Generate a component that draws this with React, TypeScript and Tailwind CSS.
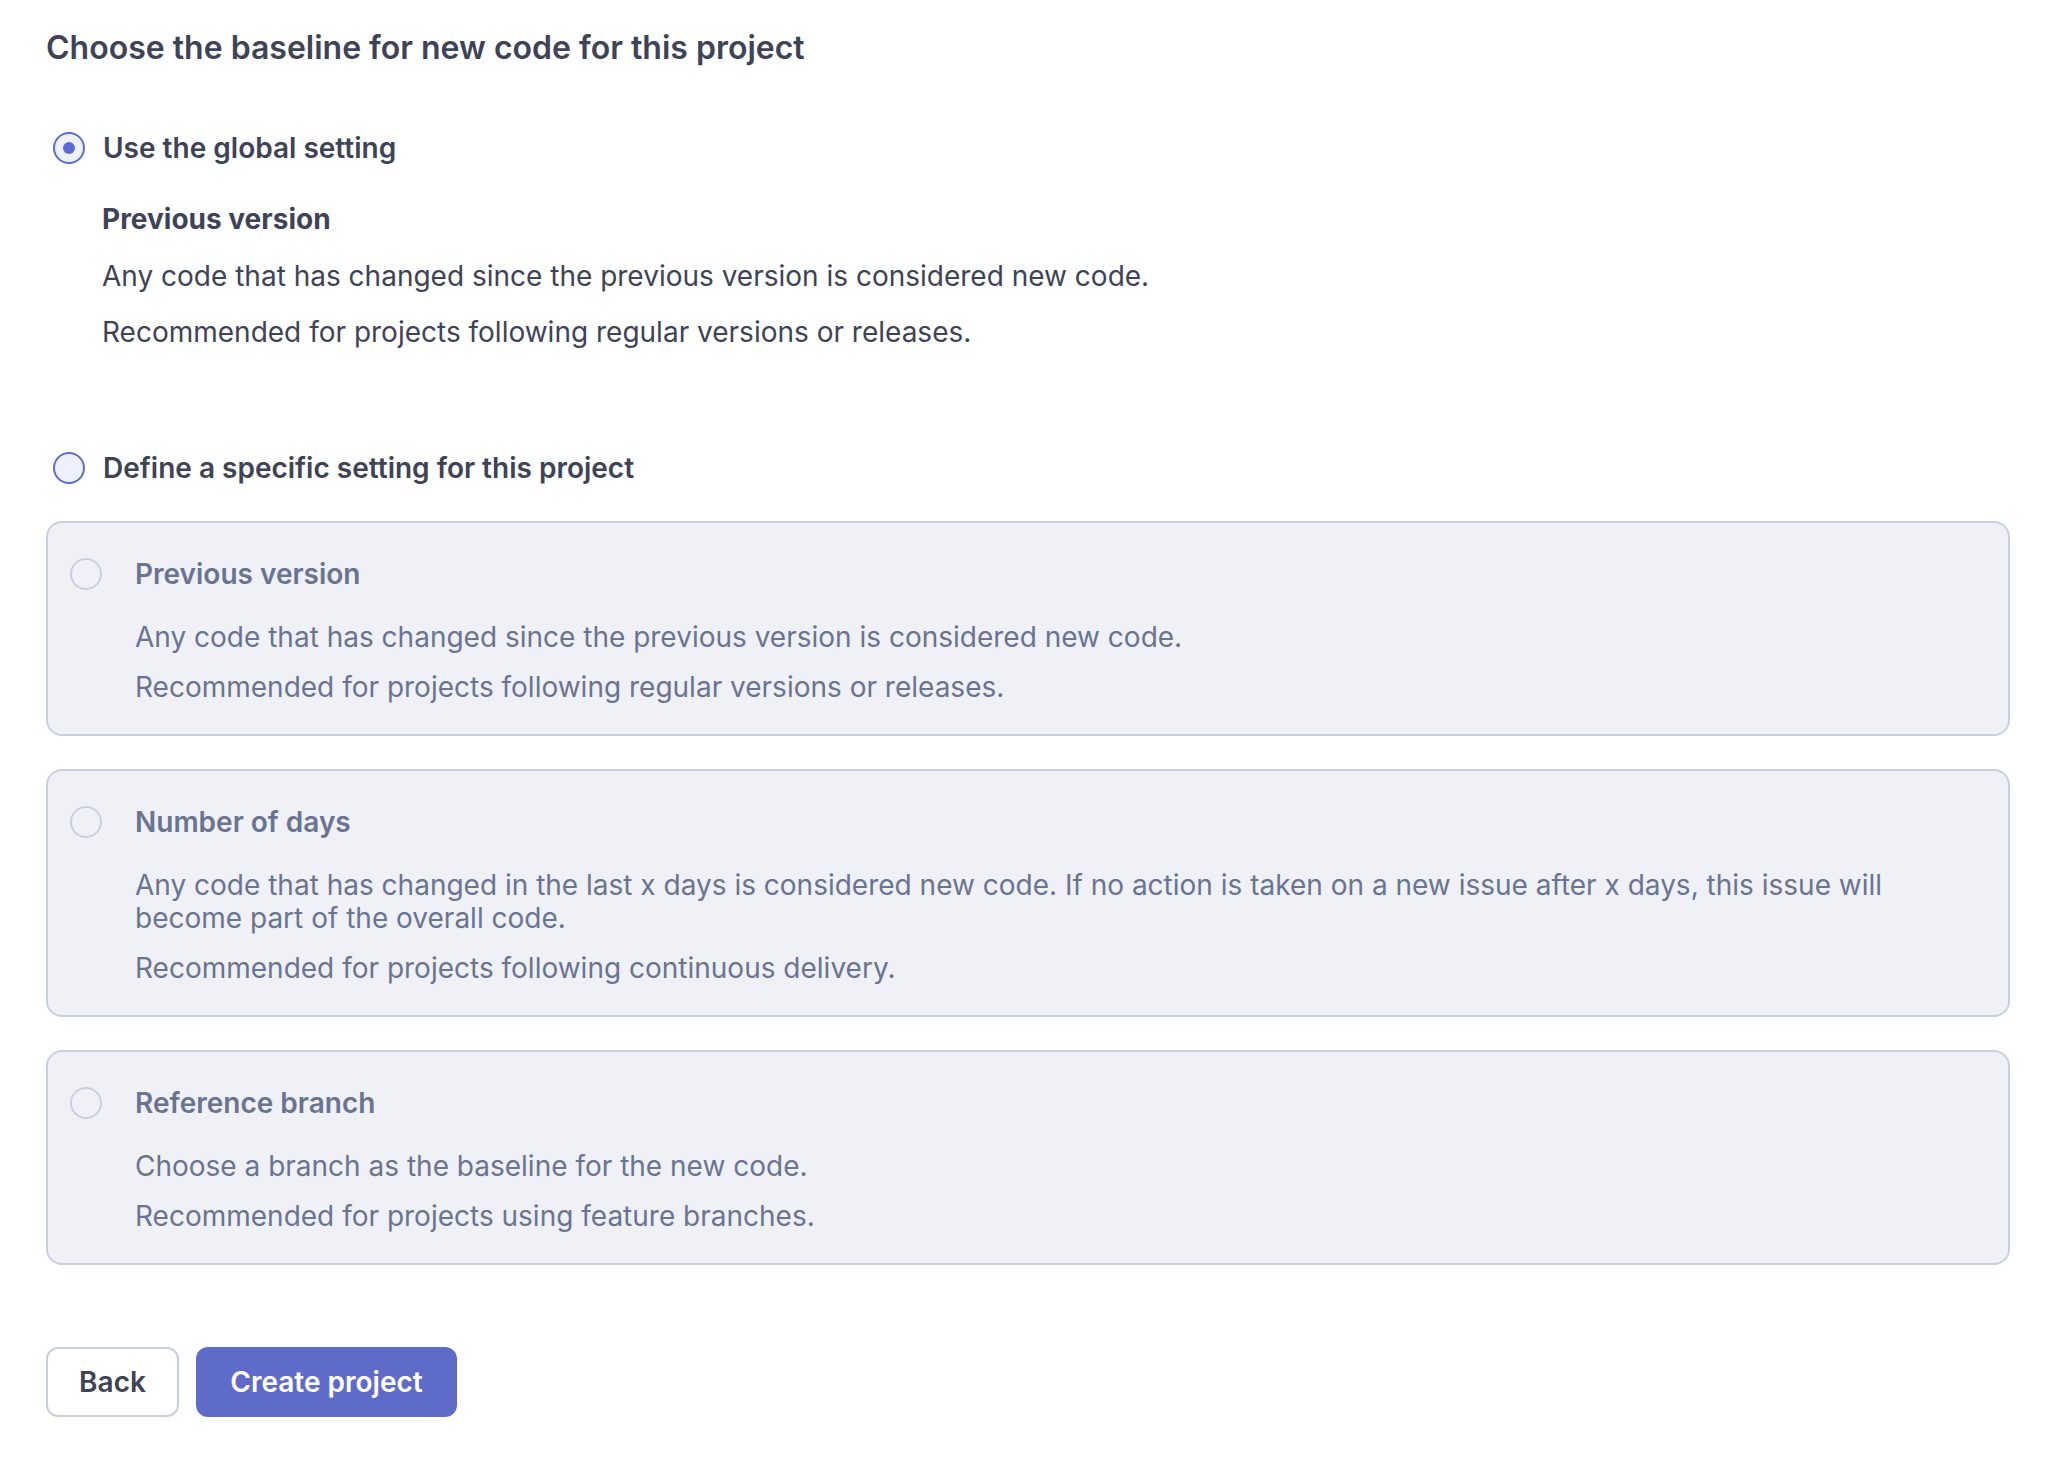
import React from 'react';

type Option = {
  id: string;
  title: string;
  lines: string[];
};

const options: Option[] = [
  {
    id: 'previous-version',
    title: 'Previous version',
    lines: [
      'Any code that has changed since the previous version is considered new code.',
      'Recommended for projects following regular versions or releases.',
    ],
  },
  {
    id: 'number-of-days',
    title: 'Number of days',
    lines: [
      'Any code that has changed in the last x days is considered new code. If no action is taken on a new issue after x days, this issue will become part of the overall code.',
      'Recommended for projects following continuous delivery.',
    ],
  },
  {
    id: 'reference-branch',
    title: 'Reference branch',
    lines: [
      'Choose a branch as the baseline for the new code.',
      'Recommended for projects using feature branches.',
    ],
  },
];

const Radio = ({ checked }: { checked?: boolean }) => (
  <span className="flex h-[32px] w-[32px] shrink-0 items-center justify-center rounded-full border-2 border-[#5d6cd0] bg-[#eef0fb]">
    {checked && <span className="h-[12px] w-[12px] rounded-full bg-[#5d6cd0]" />}
  </span>
);

const OptionCard = ({ option }: { option: Option }) => (
  <div className="rounded-[16px] border-2 border-[#c8cfe0] bg-[#eff1f7] pl-[22px] pr-[40px] pt-[31px] pb-[30px]">
    <div className="flex items-center gap-[33px]">
      <span className="h-[32px] w-[32px] shrink-0 rounded-full border-2 border-[#c8cfe0]" />
      <span className="text-[28px] font-semibold leading-[40px] text-[#6a7492]">{option.title}</span>
    </div>
    <div className="pl-[65px] text-[28px] leading-[33px] text-[#6a7492]">
      {option.lines.map((line, i) => (
        <p key={i} className={i === 0 ? 'mt-[27px]' : 'mt-[17px]'}>
          {line}
        </p>
      ))}
    </div>
  </div>
);

export default function App() {
  return (
    <div className="min-h-screen bg-white pl-[46px] pr-[38px] pt-[28px] font-['Inter',sans-serif] text-[#3e4357]">
      <h2 className="text-[32px] font-semibold leading-[40px]">Choose the baseline for new code for this project</h2>

      <label className="mt-[60px] flex items-center gap-[18px] pl-[7px]">
        <Radio checked />
        <span className="text-[28px] font-semibold leading-[40px]">Use the global setting</span>
      </label>

      <div className="pl-[56px]">
        <p className="mt-[31px] text-[28px] font-bold leading-[40px]">Previous version</p>
        <p className="mt-[17px] text-[28px] leading-[40px]">
          Any code that has changed since the previous version is considered new code.
        </p>
        <p className="mt-[16px] text-[28px] leading-[40px]">
          Recommended for projects following regular versions or releases.
        </p>
      </div>

      <label className="mt-[96px] flex items-center gap-[18px] pl-[7px]">
        <Radio />
        <span className="text-[28px] font-semibold leading-[40px]">Define a specific setting for this project</span>
      </label>

      <div className="mt-[33px] flex flex-col gap-[33px]">
        {options.map((option) => (
          <OptionCard key={option.id} option={option} />
        ))}
      </div>

      <div className="mt-[82px] flex items-center gap-[17px] pb-[40px]">
        <button className="h-[70px] w-[133px] rounded-[12px] border-2 border-[#c8cfe0] bg-white text-[28px] font-semibold text-[#3e4357]">
          Back
        </button>
        <button className="h-[70px] w-[261px] rounded-[12px] bg-[#5f6bc9] text-[28px] font-semibold text-white">
          Create project
        </button>
      </div>
    </div>
  );
}
